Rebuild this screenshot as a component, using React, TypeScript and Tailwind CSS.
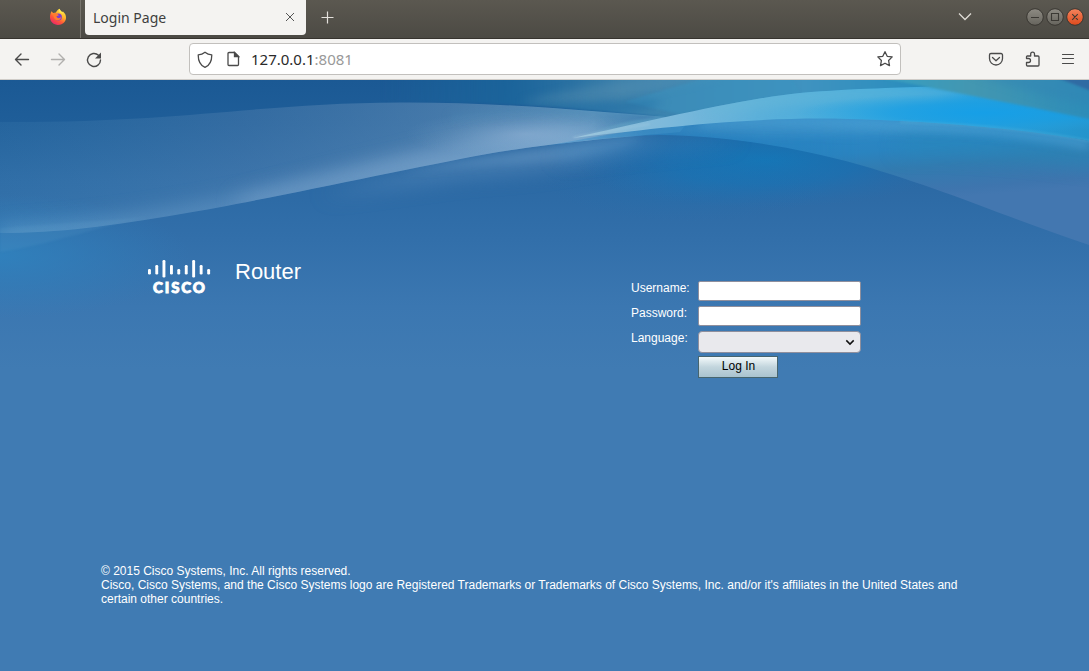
import React from "react";

function FirefoxLogo() {
  return (
    <svg width="18" height="18" viewBox="0 0 18 18">
      <defs>
        <linearGradient id="fox" x1="0.85" y1="0.05" x2="0.25" y2="1">
          <stop offset="0" stopColor="#fff04a" />
          <stop offset="0.35" stopColor="#ffb52d" />
          <stop offset="0.65" stopColor="#ff5a36" />
          <stop offset="1" stopColor="#e9226f" />
        </linearGradient>
      </defs>
      <path fill="url(#fox)" d="M2.4 3.2 4.2 5 7 4.600C7.700 3 9 1.200 10.800.8c.2 1.500 1.200 2.200 2.200 3.200l1-.4c2 1.800 3.100 3.700 3 6.400C16.800 14 13.300 17 9 17S1.200 13.800 1 9.600C.9 7 1.600 5 2.400 3.200Z" />
      <circle cx="9.300" cy="9" r="3.600" fill="#7a3fd0" />
      <path d="M4.300 5.500c1.500-.8 3-.6 4.200.5L10 7.200 7.500 8.300c0 2 3 2.500 4.700.8-.2 2-1.700 3.600-4.200 3.200-2.200-.4-3.700-2.500-3.700-6.800Z" fill="#ff7c2f" />
      <path d="M10.600 1c.2 1.700 3.200 2.900 4.100 5.600-.8-1-2.200-1.900-3.900-2C9.600 3.700 9.600 2.200 10.600 1Z" fill="#ffe94d" />
    </svg>
  );
}

function TitleBar() {
  return (
    <div className="flex h-[39px] shrink-0 border-b border-[#37342f] bg-linear-to-b from-[#5b5850] to-[#4c4a44]">
      <div className="flex w-[81px] justify-end border-r border-[#77746d] pt-2 pr-[13px]">
        <FirefoxLogo />
      </div>
      <div className="ml-1 flex h-[35px] w-[221px] justify-between rounded-b-[4px] bg-[#f4f3f1] pr-[11px] pl-2">
        <span className="pt-[8px] font-['Noto_Sans',sans-serif] text-[14px] leading-5 text-[#3f3f3f]">Login Page</span>
        <svg className="mt-3" width="10" height="10" viewBox="0 0 10 10" stroke="#555" strokeWidth="1">
          <path d="M1 1l8 8M9 1 1 9" />
        </svg>
      </div>
      <svg className="mt-[11px] ml-[15px]" width="13" height="13" viewBox="0 0 13 13" stroke="#e4e1dc" strokeWidth="1.200">
        <path d="M6.500 .5v12M.5 6.500h12" />
      </svg>
      <svg className="mt-[12px] ml-auto" width="14" height="9" viewBox="0 0 14 9" fill="none" stroke="#dedbd5" strokeWidth="1.300">
        <path d="M1 1.500 7 7.500l6-6" />
      </svg>
      <svg className="mt-[8px] mr-[4px] ml-[54px]" width="59" height="18" viewBox="0 0 59 18" fill="none">
        <defs>
          <linearGradient id="grayButton" x2="0" y2="1">
            <stop stopColor="#8e8b83" />
            <stop offset="1" stopColor="#66645d" />
          </linearGradient>
          <linearGradient id="closeButton" x2="0" y2="1">
            <stop stopColor="#f5845d" />
            <stop offset="1" stopColor="#dd4a1c" />
          </linearGradient>
        </defs>
        <circle cx="9" cy="9" r="8.300" fill="url(#grayButton)" stroke="#393732" />
        <circle cx="29" cy="9" r="8.300" fill="url(#grayButton)" stroke="#393732" />
        <circle cx="49" cy="9" r="8.300" fill="url(#closeButton)" stroke="#393732" />
        <path d="M5 9.500h8M25.500 5.500h7v7h-7zM46.200 6.200l5.600 5.600M51.800 6.200l-5.600 5.600" stroke="#3b3934" strokeWidth="1.100" />
      </svg>
    </div>
  );
}

function ToolBar() {
  return (
    <div className="flex h-[41px] shrink-0 items-center border-b border-[#cfccc8] bg-[#f4f3f1]">
      <svg width="189" height="40" viewBox="0 39 189 40" fill="none" stroke="#4a4a4a" strokeWidth="1.400" strokeLinecap="round" strokeLinejoin="round">
        <path d="M28.500 59.500H15.500M21 54l-5.500 5.500L21 65" />
        <path stroke="#b1b0ae" d="M51.500 59.500h13M59 54l5.500 5.500L59 65" />
        <path d="M98.500 55.300A6.500 6.500 0 1 0 100.500 60" />
        <path fill="#4a4a4a" stroke="none" d="M101 52.500v6h-6z" />
      </svg>
      <div className="flex h-8 w-[712px] shrink-0 items-center rounded-[4px] border border-[#c2c0bd] bg-white pr-[6px] pl-[7px]">
        <svg className="mt-px" width="16" height="18" viewBox="0 0 16 18" fill="none" stroke="#4a4a4a" strokeWidth="1.300">
          <path strokeLinejoin="round" d="M8 1.200C6 2.800 3.800 3.600 1.200 3.900c0 5 1.200 10 6.800 12.500 5.600-2.500 6.800-7.500 6.800-12.500C12.200 3.600 10 2.800 8 1.200Z" />
        </svg>
        <svg className="ml-[14px]" width="13" height="16" viewBox="0 0 13 16" fill="none" stroke="#4a4a4a" strokeWidth="1.300">
          <path strokeLinejoin="round" d="M2 1.500h5.500L11.500 5.500v8a1 1 0 0 1-1 1H2a1 1 0 0 1-1-1v-11a1 1 0 0 1 1-1Z" />
          <path fill="#4a4a4a" d="M7.500 1.500v4h4z" />
        </svg>
        <span className="mb-px ml-[11px] font-['Noto_Sans',sans-serif] text-[15px] leading-5 text-[#2a2a2a]">
          127.0.0.1<span className="text-[#999]">:8081</span>
        </span>
        <svg className="ml-auto" width="18" height="18" viewBox="0 0 18 18" fill="none" stroke="#4a4a4a" strokeWidth="1.300" strokeLinejoin="round">
          <path d="m9 1.700 2.200 4.600 5 .6-3.600 3.600.9 5.100L9 13.200l-4.500 2.400.9-5.100-3.600-3.600 5-.6Z" />
        </svg>
      </div>
      <svg className="shrink-0" width="188" height="40" viewBox="901 39 188 40" fill="none" stroke="#4a4a4a" strokeWidth="1.300" strokeLinecap="round" strokeLinejoin="round">
        <path d="M991 53.500h10a1.500 1.500 0 0 1 1.500 1.500v3.500a6.500 6.500 0 0 1-13 0V55a1.500 1.500 0 0 1 1.500-1.500ZM992.500 57.500l3.500 3.200 3.500-3.200" />
        <path d="M1027 56h3.700v-2a1.900 1.900 0 0 1 3.800 0v2h3.500a1 1 0 0 1 1 1v8a1 1 0 0 1-1 1h-10.500a1 1 0 0 1-1-1v-2.500h2a2 2 0 0 0 0-4h-2V57a1 1 0 0 1 .5-1Z" />
        <path d="M1062.500 54.500h11M1062.500 58.500h11M1062.500 63.500h11" strokeWidth="1.200" />
      </svg>
    </div>
  );
}

function WaveBackground() {
  return (
    <svg className="absolute inset-0" width="1089" height="591" viewBox="0 80 1089 591" fill="none" colorInterpolationFilters="sRGB">
      <defs>
        <linearGradient id="base" gradientUnits="userSpaceOnUse" x1="0" y1="80" x2="0" y2="370">
          <stop stopColor="#1b5994" />
          <stop offset="0.15" stopColor="#1f5e99" />
          <stop offset="0.35" stopColor="#2b69a4" />
          <stop offset="0.55" stopColor="#326faa" />
          <stop offset="0.78" stopColor="#3b77b1" />
          <stop offset="1" stopColor="#407bb3" />
        </linearGradient>
        <linearGradient id="ribbon" gradientUnits="userSpaceOnUse" x1="0" y1="0" x2="690" y2="0">
          <stop stopColor="#5595bf" stopOpacity="0.12" />
          <stop offset="0.35" stopColor="#7095bd" stopOpacity="0.26" />
          <stop offset="0.65" stopColor="#86a8c8" stopOpacity="0.38" />
          <stop offset="0.86" stopColor="#82b2d2" stopOpacity="0.6" />
          <stop offset="1" stopColor="#5ba4cf" stopOpacity="0.35" />
        </linearGradient>
        <linearGradient id="crest" gradientUnits="userSpaceOnUse" x1="573" y1="0" x2="1089" y2="0">
          <stop stopColor="#a5cde1" stopOpacity="0.75" />
          <stop offset="0.18" stopColor="#7db9db" />
          <stop offset="0.36" stopColor="#5bb0da" />
          <stop offset="0.58" stopColor="#40abdd" />
          <stop offset="0.78" stopColor="#23a0e0" />
          <stop offset="1" stopColor="#2494cc" />
        </linearGradient>
        <linearGradient id="sweep" gradientUnits="userSpaceOnUse" x1="850" y1="118" x2="857" y2="205">
          <stop stopColor="#2c8ac9" />
          <stop offset="0.4" stopColor="#2a84c0" />
          <stop offset="0.62" stopColor="#327bb0" />
          <stop offset="0.9" stopColor="#3e75ae" />
          <stop offset="1" stopColor="#4377b0" />
        </linearGradient>
        <linearGradient id="sweepFade" gradientUnits="userSpaceOnUse" x1="560" y1="0" x2="860" y2="0">
          <stop stopColor="#fff" stopOpacity="0.35" />
          <stop offset="1" stopColor="#fff" />
        </linearGradient>
        <linearGradient id="topSheen" gradientUnits="userSpaceOnUse" x1="380" y1="0" x2="1089" y2="0">
          <stop stopColor="#19689d" stopOpacity="0" />
          <stop offset="0.18" stopColor="#1b689d" stopOpacity="0.7" />
          <stop offset="0.34" stopColor="#3b80ab" />
          <stop offset="0.6" stopColor="#3f93c0" />
          <stop offset="0.78" stopColor="#278dbe" />
          <stop offset="1" stopColor="#337faf" />
        </linearGradient>
        <linearGradient id="teal" gradientUnits="userSpaceOnUse" x1="910" y1="0" x2="1089" y2="0">
          <stop stopColor="#3a9cbd" />
          <stop offset="0.35" stopColor="#4397b1" />
          <stop offset="1" stopColor="#2d8db9" />
        </linearGradient>
        <radialGradient id="deepPool">
          <stop stopColor="#1279ba" stopOpacity="0.85" />
          <stop offset="0.5" stopColor="#1874b6" stopOpacity="0.6" />
          <stop offset="1" stopColor="#2570b0" stopOpacity="0" />
        </radialGradient>
        <radialGradient id="leftGlow">
          <stop stopColor="#2f84c0" stopOpacity="0.8" />
          <stop offset="1" stopColor="#2f80bd" stopOpacity="0" />
        </radialGradient>
        <radialGradient id="ribbonGlow">
          <stop stopColor="#a4bfde" stopOpacity="0.38" />
          <stop offset="1" stopColor="#8db3d5" stopOpacity="0" />
        </radialGradient>
        <radialGradient id="azure">
          <stop stopColor="#169fe7" />
          <stop offset="0.5" stopColor="#1b9fe3" stopOpacity="0.7" />
          <stop offset="1" stopColor="#2aa3df" stopOpacity="0" />
        </radialGradient>
        <filter id="blur4" x="-30%" y="-70%" width="160%" height="240%"><feGaussianBlur stdDeviation="4" /></filter>
        <filter id="blur10" x="-30%" y="-100%" width="160%" height="300%"><feGaussianBlur stdDeviation="10" /></filter>
        <filter id="blur1" x="-10%" y="-20%" width="120%" height="140%"><feGaussianBlur stdDeviation="0.8" /></filter>
        <clipPath id="ribbonClip">
          <path d="M0 122C180 123 260 103 400 102.500C500 102 590 111 690 119L680 132C600 139 545 144 487 154C400 170 270 199 181 214C110 226 60 233 0 233Z" />
        </clipPath>
        <clipPath id="crestClip">
          <path d="M573 138C640 123 740 99 800 93C860 88 900 88 940 86L1089 100V141C1040 132 960 122 850 119C750 116 650 129 573 138Z" />
        </clipPath>
        <clipPath id="sweepClip">
          <path d="M545 146C600 136 650 126 730 119C850 114 1000 121 1089 141V245C1010 219 950 191 860 165C790 145 720 136 660 135C620 136 580 141 545 146Z" />
        </clipPath>
        <mask id="sweepMask" maskUnits="userSpaceOnUse" x="540" y="100" width="549" height="150">
          <path fill="url(#sweepFade)" d="M540 100h549v150H540z" />
        </mask>
      </defs>
      <path fill="url(#base)" d="M0 80h1089v591H0z" />
      <path fill="url(#topSheen)" d="M380 70H1099V125C980 108 860 95 760 104C700 110 650 123 590 134C620 120 660 117 660 117C570 107 500 102 380 101Z" filter="url(#blur1)" />
      <path d="M520 102C560 92 600 84 650 76L730 74C690 84 640 95 590 104Z" fill="#5a92b2" fillOpacity="0.4" filter="url(#blur4)" />
      <path d="M625 102C650 94 685 84 710 76H790L800 92L680 114Z" fill="#3c95c1" fillOpacity="0.45" filter="url(#blur1)" />
      <path d="M546 109C580 103 620 101 665 101C650 108 640 112 620 114Z" fill="#2170a6" fillOpacity="0.6" filter="url(#blur4)" />
      <ellipse cx="0" cy="256" rx="190" ry="62" fill="url(#leftGlow)" />
      <path d="M0 252C60 243 100 225 150 217L0 228Z" fill="#62a5ce" fillOpacity="0.14" filter="url(#blur1)" />
      <path d="M320 196C420 166 500 150 660 134C640 160 540 172 470 176Z" fill="#6a98c5" fillOpacity="0.5" filter="url(#blur10)" />
      <path d="M400 172C480 155 545 147 640 136C640 150 560 162 500 164Z" fill="#7aa8d0" fillOpacity="0.3" filter="url(#blur4)" />
      <ellipse cx="765" cy="160" rx="190" ry="48" fill="url(#deepPool)" />
      <ellipse cx="690" cy="180" rx="150" ry="42" fill="url(#deepPool)" fillOpacity="0.25" />
      <path d="M560 144C620 134 690 135 740 142C690 147 620 152 560 160Z" fill="#4289c1" fillOpacity="0.45" filter="url(#blur10)" />
      <g clipPath="url(#ribbonClip)">
        <path d="M0 80h700v170H0z" fill="url(#ribbon)" />
        <path d="M0 238C180 230 350 180 487 154L600 137" stroke="#8dbce0" strokeOpacity="0.32" strokeWidth="22" filter="url(#blur10)" />
        <path d="M230 200C370 164 440 140 560 126L600 138L487 154L250 208Z" fill="#9ab9da" fillOpacity="0.36" filter="url(#blur10)" />
        <ellipse cx="525" cy="134" rx="120" ry="24" fill="url(#ribbonGlow)" />
        <path d="M450 115C490 111 520 110 560 108L680 118L610 118C560 114 500 114 450 120Z" fill="#4e8fb8" fillOpacity="0.35" filter="url(#blur4)" />
      </g>
      <g clipPath="url(#sweepClip)">
        <g mask="url(#sweepMask)">
          <path d="M540 100h549v150H540z" fill="url(#sweep)" />
        </g>
        <path d="M640 129L760 118L900 124L1000 133L760 136Z" fill="#57a2d2" fillOpacity="0.35" filter="url(#blur4)" />
        <path d="M900 138C980 136 1050 142 1100 151V166C1030 155 950 150 900 152Z" fill="#2789b8" fillOpacity="0.65" filter="url(#blur10)" />
        <path d="M700 121C830 117 990 125 1089 145" stroke="#5aaddb" strokeOpacity="0.45" strokeWidth="9" filter="url(#blur4)" />
      </g>
      <g clipPath="url(#crestClip)">
        <path d="M570 80h519v65H570z" fill="url(#crest)" />
        <path d="M730 96C840 80 940 84 980 92L930 100C840 99 780 107 700 116Z" fill="#6ab8d8" fillOpacity="0.45" filter="url(#blur4)" />
        <ellipse cx="985" cy="113" rx="190" ry="20" fill="url(#azure)" />
      </g>
      <path d="M885 70H1099V121C1025 106 960 93 885 79Z" fill="url(#teal)" filter="url(#blur1)" />
      <path d="M970 72H1100V107C1040 97 1010 86 970 72Z" fill="#3184b4" fillOpacity="0.5" filter="url(#blur4)" />
      <path d="M1050 75H1099V94Z" fill="#30649f" fillOpacity="0.8" filter="url(#blur1)" />
      <path d="M573 137.500C600 132 625 128 650 124" stroke="#bddae8" strokeOpacity="0.3" strokeWidth="1.500" filter="url(#blur1)" />
      <path d="M900 122C970 124 1040 131 1095 142" stroke="#58b4d8" strokeOpacity="0.3" strokeWidth="3" filter="url(#blur1)" />
    </svg>
  );
}

const logoBars = [
  [148, 269, 274.500], [155.300, 265, 274.500], [162.500, 260, 277.500], [170, 265, 274.500], [177.300, 269, 274.500],
  [184.800, 265, 274.500], [192.200, 260, 277.500], [199.700, 265, 274.500], [207.200, 269, 274.500],
];

function CiscoLogo() {
  return (
    <svg width="64" height="36" viewBox="147 259 64 36">
      {logoBars.map(([x, top, bottom]) => (
        <rect key={x} x={x} y={top} width="2.900" height={bottom - top} rx="1.200" fill="#fff" />
      ))}
      <text x="153" y="292.700" textLength="52" lengthAdjust="spacing" fill="#fff" stroke="#fff" strokeWidth="0.900" className="font-['Lato',sans-serif] text-[15px] font-black">
        CISCO
      </text>
    </svg>
  );
}

function LoginForm() {
  return (
    <form className="mt-[22px] grid w-[231px] grid-cols-[68px_163px] text-[12px] leading-[14px] text-white" onSubmit={(e) => e.preventDefault()}>
      <label className="h-[25px] pl-px" htmlFor="user">Username:</label>
      <input id="user" className="h-5 rounded-[2px] border border-[#8f8f9d] bg-white px-1 text-black" />
      <label className="h-[25px] pl-px" htmlFor="password">Password:</label>
      <input id="password" type="password" className="h-5 rounded-[2px] border border-[#8f8f9d] bg-white px-1 text-black" />
      <label className="h-[25px] pl-px" htmlFor="language">Language:</label>
      <div className="flex h-[22px] items-center justify-end rounded-[4px] border border-[#8f8f9d] bg-[#e9e9ed] pr-[5px]" id="language">
        <svg width="10" height="7" viewBox="0 0 10 7" fill="none" stroke="#111" strokeWidth="1.500">
          <path d="m1.300 1.400 3.700 3.700 3.700-3.700" />
        </svg>
      </div>
      <button className="col-start-2 h-[22px] w-20 border border-[#47656e] bg-linear-to-b from-[#f4fafb] via-[#c2d5dd] via-50% to-[#a9c3cf] pb-[2px] pl-px text-black">Log In</button>
    </form>
  );
}

export default function App() {
  return (
    <div className="flex h-[671px] w-[1089px] flex-col overflow-hidden font-['Liberation_Sans',sans-serif]">
      <TitleBar />
      <ToolBar />
      <main className="relative h-[591px] overflow-hidden">
        <WaveBackground />
        <div className="relative flex h-full flex-col pt-[179px]">
          <div className="flex h-[304px] items-start pl-[147px]">
            <CiscoLogo />
            <h1 className="ml-[24px] w-[395px] text-[22px] leading-[25px] text-white">Router</h1>
            <LoginForm />
          </div>
          <footer className="ml-[101px] w-[870px] pt-px text-[12px] leading-[14px] text-white">
            <p>© 2015 Cisco Systems, Inc. All rights reserved.</p>
            <p>Cisco, Cisco Systems, and the Cisco Systems logo are Registered Trademarks or Trademarks of Cisco Systems, Inc. and/or it's affiliates in the United States and certain other countries.</p>
          </footer>
        </div>
      </main>
    </div>
  );
}
